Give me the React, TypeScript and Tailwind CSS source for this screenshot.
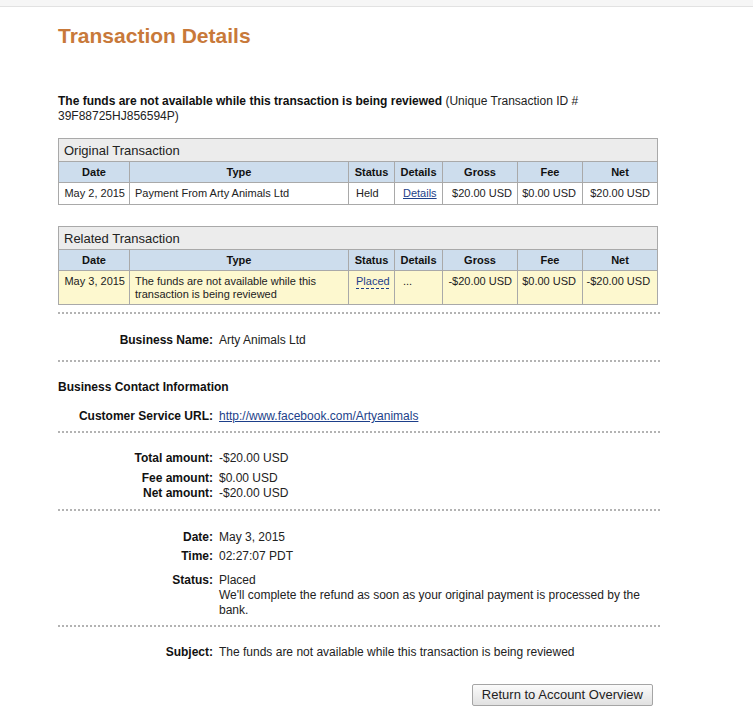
import React from "react";

const Row = ({ label, children, className = "" }: { label: string; children: React.ReactNode; className?: string }) => (
  <div className={`flex w-[602px] leading-[15px] ${className}`}>
    <div className="w-[155px] shrink-0 text-right font-bold text-[#111]">{label}</div>
    <div className="ml-[6px] flex-1 text-[#222]">{children}</div>
  </div>
);

const Dotted = ({ className = "" }: { className?: string }) => (
  <div className={`w-[602px] border-t-2 border-dotted border-[#b3b3b3] ${className}`} />
);

const cols = [71, 219, 46, 48, 75, 65, 75];

const TxTable = ({
  title,
  row,
  yellow,
}: {
  title: string;
  row: { date: string; type: string; status: React.ReactNode; details: React.ReactNode; gross: string; fee: string; net: string };
  yellow?: boolean;
}) => {
  const td = `border border-[#a9a9a9] align-top py-[4px] leading-[13px] text-[11px] text-[#222] ${yellow ? "bg-[#fdf8cf] pb-[3px]" : "bg-white"}`;
  const th = "border border-[#a9a9a9] bg-[#cddded] h-[21px] text-[11px] font-bold text-center text-[#111] p-0";
  return (
    <table className="w-[599px] table-fixed border-collapse">
      <colgroup>
        {cols.map((w, i) => (
          <col key={i} style={{ width: w }} />
        ))}
      </colgroup>
      <tbody>
        <tr>
          <td colSpan={7} className="h-[23px] border border-[#a9a9a9] bg-[#ececec] px-[5px] pt-[1px] text-[13px] text-[#222]">
            {title}
          </td>
        </tr>
        <tr>
          <th className={th}>Date</th>
          <th className={th}>Type</th>
          <th className={th}>Status</th>
          <th className={th}>Details</th>
          <th className={th}>Gross</th>
          <th className={th}>Fee</th>
          <th className={th}>Net</th>
        </tr>
        <tr>
          <td className={`${td} text-right pr-[4px]`}>{row.date}</td>
          <td className={`${td} pl-[5px] pr-[4px]`}>{row.type}</td>
          <td className={`${td} pl-[7px]`}>{row.status}</td>
          <td className={`${td} pl-[8px]`}>{row.details}</td>
          <td className={`${td} text-right pr-[5px]`}>{row.gross}</td>
          <td className={`${td} text-right pr-[6px]`}>{row.fee}</td>
          <td className={`${td} text-right pr-[7px]`}>{row.net}</td>
        </tr>
      </tbody>
    </table>
  );
};

export default function App() {
  return (
    <div className="min-h-[726px] bg-white font-['Liberation_Sans',Arial,sans-serif] text-[12px] text-[#222]">
      <div className="h-[7px] border-b border-[#e2e2e2] bg-[#f6f6f6]" />
      <div className="h-[718px] border-b border-[#cfcfcf] pl-[58px]">
        <h1 className="mt-[17px] text-[21px] font-bold leading-[24px] text-[#c8793a]">Transaction Details</h1>
        <p className="mt-[46px] w-[600px] leading-[15px] text-[#222]">
          <span className="font-bold text-[#111]">The funds are not available while this transaction is being reviewed</span> (Unique
          Transaction ID # 39F88725HJ856594P)
        </p>
        <div className="mt-[14px]">
          <TxTable
            title="Original Transaction"
            row={{
              date: "May 2, 2015",
              type: "Payment From Arty Animals Ltd",
              status: "Held",
              details: <a className="text-[#1d3f8a] underline underline-offset-[1px]">Details</a>,
              gross: "$20.00 USD",
              fee: "$0.00 USD",
              net: "$20.00 USD",
            }}
          />
        </div>
        <div className="mt-[21px]">
          <TxTable
            yellow
            title="Related Transaction"
            row={{
              date: "May 3, 2015",
              type: "The funds are not available while this transaction is being reviewed",
              status: <span className="text-[#1d3f8a] underline decoration-dashed underline-offset-[3px]">Placed</span>,
              details: "...",
              gross: "-$20.00 USD",
              fee: "$0.00 USD",
              net: "-$20.00 USD",
            }}
          />
        </div>
        <Dotted className="mt-[7px]" />
        <Row label="Business Name:" className="mt-[19px]">
          Arty Animals Ltd
        </Row>
        <Dotted className="mt-[12px]" />
        <div className="mt-[18px] font-bold leading-[15px] text-[#111]">Business Contact Information</div>
        <Row label="Customer Service URL:" className="mt-[14px]">
          <a className="text-[#1d3f8a] underline">http://www.facebook.com/Artyanimals</a>
        </Row>
        <Dotted className="mt-[7px]" />
        <Row label="Total amount:" className="mt-[18px]">
          -$20.00 USD
        </Row>
        <Row label="Fee amount:" className="mt-[5px]">
          $0.00 USD
        </Row>
        <Row label="Net amount:">-$20.00 USD</Row>
        <Dotted className="mt-[8px]" />
        <Row label="Date:" className="mt-[19px]">
          May 3, 2015
        </Row>
        <Row label="Time:" className="mt-[4px]">
          02:27:07 PDT
        </Row>
        <Row label="Status:" className="mt-[9px]">
          Placed
          <br />
          We'll complete the refund as soon as your original payment is processed by the bank.
        </Row>
        <Dotted className="mt-[7px]" />
        <Row label="Subject:" className="mt-[18px]">
          The funds are not available while this transaction is being reviewed
        </Row>
        <div className="mt-[24px] flex w-[600px] justify-end pr-[5px]">
          <button className="h-[22px] rounded-[2px] border border-[#a5a5a5] bg-linear-to-b from-[#fbfbfb] to-[#e1e1e1] px-[9px] text-[13px] leading-[18px] text-[#222]">
            Return to Account Overview
          </button>
        </div>
      </div>
    </div>
  );
}
